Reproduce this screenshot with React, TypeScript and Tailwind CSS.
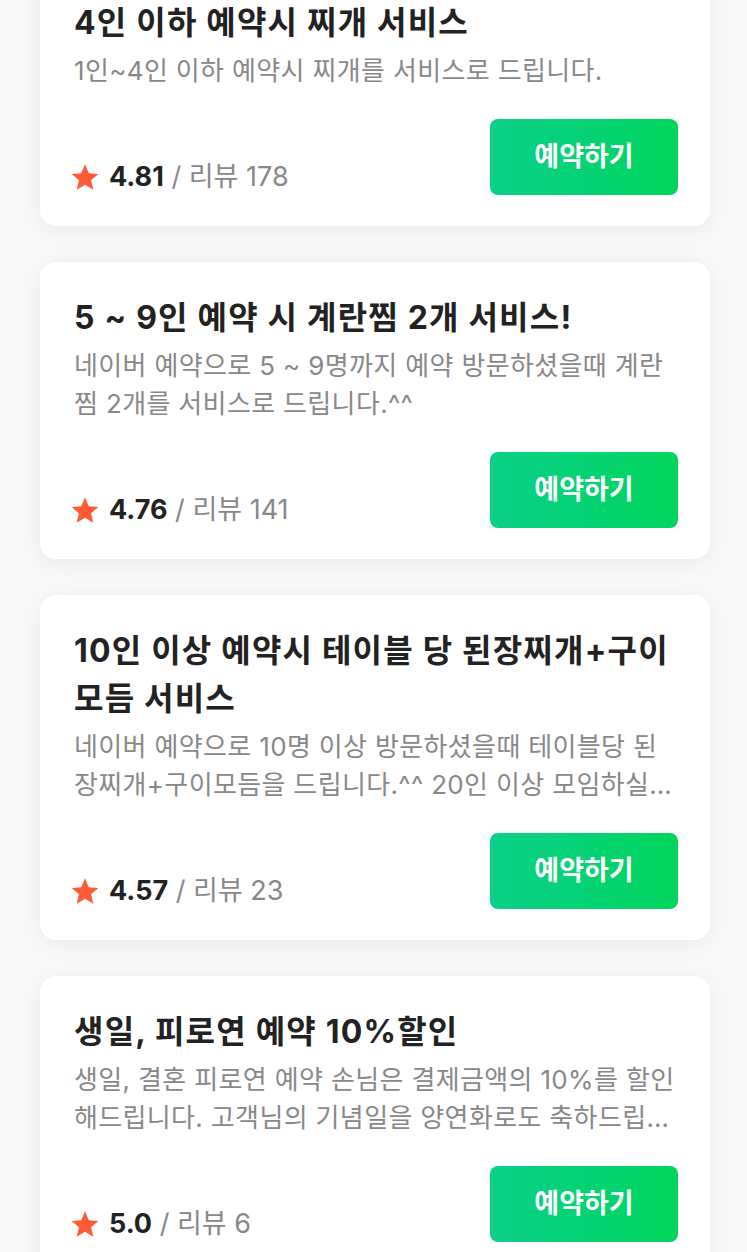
const FONT = "font-['Inter','Noto_Sans_CJK_KR',sans-serif]";

type Offer = {
  title: string;
  desc: string;
  rating: string;
  reviews: number;
};

const offers: Offer[] = [
  {
    title: "4인 이하 예약시 찌개 서비스",
    desc: "1인~4인 이하 예약시 찌개를 서비스로 드립니다.",
    rating: "4.81",
    reviews: 178,
  },
  {
    title: "5 ~ 9인 예약 시 계란찜 2개 서비스!",
    desc: "네이버 예약으로 5 ~ 9명까지 예약 방문하셨을때 계란찜 2개를 서비스로 드립니다.^^",
    rating: "4.76",
    reviews: 141,
  },
  {
    title: "10인 이상 예약시 테이블 당 된장찌개+구이모듬 서비스",
    desc: "네이버 예약으로 10명 이상 방문하셨을때 테이블당 된장찌개+구이모듬을 드립니다.^^ 20인 이상 모임하실 경우 미리 연락주시면 자리를 준비해 드립니다.",
    rating: "4.57",
    reviews: 23,
  },
  {
    title: "생일, 피로연 예약 10%할인",
    desc: "생일, 결혼 피로연 예약 손님은 결제금액의 10%를 할인해드립니다. 고객님의 기념일을 양연화로도 축하드립니다.",
    rating: "5.0",
    reviews: 6,
  },
];

function Star() {
  return (
    <svg viewBox="1.5 1.5 21 21" className="w-[26px] h-[26px] shrink-0" aria-hidden>
      <path
        d="M12 1.8l3.05 7.2 7.75.62-5.9 5.1 1.8 7.6L12 18.2l-6.7 4.12 1.8-7.6-5.9-5.1 7.75-.62z"
        fill="#ff5a36"
      />
    </svg>
  );
}

function OfferCard({ offer }: { offer: Offer }) {
  return (
    <div className="bg-white rounded-[16px] shadow-[0_4px_24px_rgba(0,0,0,0.06)] pt-[32px] pb-[31px] pl-[34px] pr-[32px]">
      <h2 className="text-[32px] leading-[48px] font-bold text-[#222] tracking-[1.2px]">
        {offer.title}
      </h2>
      <p className="mt-[5px] text-[26px] leading-[38px] text-[#888] line-clamp-2 tracking-[0.35px]">
        {offer.desc}
      </p>
      <div className="mt-[29px] flex items-end justify-between">
        <div className="flex items-center gap-[11px] -ml-[2px] pb-[1px] text-[27px] leading-[34px]">
          <Star />
          <span>
            <span className="font-bold text-[#222]">{offer.rating}</span>
            <span className="text-[#888]"> / 리뷰 {offer.reviews}</span>
          </span>
        </div>
        <button className="w-[188px] h-[76px] rounded-[8px] bg-gradient-to-r from-[#0bd088] to-[#02d55c] text-white text-[27px] font-semibold">
          예약하기
        </button>
      </div>
    </div>
  );
}

export default function App() {
  return (
    <div className={`${FONT} min-h-screen bg-[#f8f8f8] overflow-hidden`}>
      <div className="-mt-[33px] pl-[40px] pr-[37px] flex flex-col gap-[36px] pb-10">
        {offers.map((o) => (
          <OfferCard key={o.title} offer={o} />
        ))}
      </div>
    </div>
  );
}
